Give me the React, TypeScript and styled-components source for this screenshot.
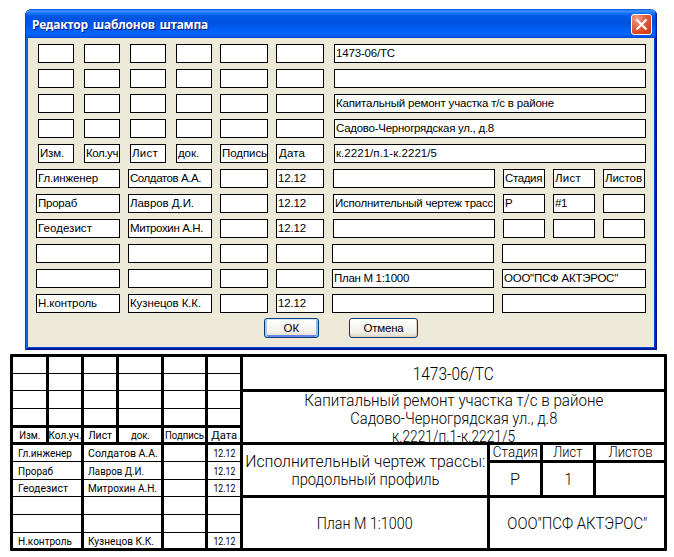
import React, { useLayoutEffect, useRef, useState } from 'react';
import styled, { createGlobalStyle } from 'styled-components';

const GlobalStyle = createGlobalStyle`
  * { box-sizing: border-box; }
  html, body { margin: 0; background: #fff; overflow: hidden; }
  button { margin: 0; padding: 0; }
`;

const Page = styled.div`
  width: 674px;
  height: 557px;
  padding-top: 9px;
  background: #fff;
  color: #000;
  font-family: 'Liberation Sans', Arial, sans-serif;
`;

/* ---------- Text fitted to a given measure ---------- */

const FitSpan = styled.span<{ $anchor: string }>`
  display: inline-block;
  flex: none;
  white-space: pre;
  transform-origin: ${p => p.$anchor} center;
`;

type FitProps = { text: string; width?: number; stretch?: boolean; anchor?: 'left' | 'center' };

function Fit({ text, width, stretch = false, anchor = 'left' }: FitProps) {
  const ref = useRef<HTMLSpanElement>(null);
  const [style, setStyle] = useState<React.CSSProperties>({});
  useLayoutEffect(() => {
    if (!ref.current || !width) return;
    const natural = ref.current.getBoundingClientRect().width;
    if (stretch) setStyle({ transform: `scaleX(${(width + 1) / natural})` });
    else setStyle({ letterSpacing: `${(width + 1 - natural) / text.length}px` });
  }, [text, width, stretch]);
  return <FitSpan ref={ref} $anchor={anchor} style={style}>{text}</FitSpan>;
}

/* ---------- Dialog ---------- */

const Dialog = styled.section`
  width: 632px;
  height: 341px;
  margin-left: 25px;
  border-radius: 7px 7px 0 0;
  background: #ece9d8;
  box-shadow: inset 1px 0 #0831d9, inset -1px -1px #00138c, inset 2px 0 #166aee, inset -2px -2px #001ea0, inset 3px 0 #0855dd, inset -3px -3px #0441d8;
  overflow: hidden;
`;

const TitleBar = styled.header`
  display: flex;
  align-items: center;
  justify-content: space-between;
  height: 29px;
  padding: 2px 5px 0 7px;
  background: linear-gradient(180deg, #0750d8 0, #3c95ff 2px, #1b76fa 4px, #025be9 7px, #0053e1 10px, #0054e3 15px, #0060f8 21px, #0066ff 25px, #005cf0 27px, #0142cd 29px);
  box-shadow: inset 1px 0 #0840ce, inset -1px 0 #001ea0, inset -2px 0 #0441d8;
`;

const Title = styled.h1`
  margin: 0;
  color: #fff;
  font: bold 12px/20px 'Noto Sans', 'Open Sans', sans-serif;
  word-spacing: 2px;
  text-shadow: 1px 1px #0a1883;
`;

const CloseButton = styled.button`
  display: flex;
  align-items: center;
  justify-content: center;
  width: 21px;
  height: 21px;
  border: 1px solid #fff;
  border-radius: 3px;
  background: radial-gradient(circle at 25% 20%, #f0a08a 0, #e5694a 35%, #dd4622 70%, #c13a14 100%);
`;

const Form = styled.div`
  display: flex;
  flex-direction: column;
  gap: 6px;
  padding: 6px 3px 0;
`;

const FormRow = styled.div<{ $indent: number }>`
  display: flex;
  height: 19px;
  padding-left: ${p => p.$indent}px;
`;

const FieldGroup = styled.div<{ $gap: number; $lead?: number }>`
  display: flex;
  gap: ${p => p.$gap}px;
  margin-left: ${p => p.$lead ?? 0}px;
`;

const Field = styled.div<{ $width: number; $inset: number }>`
  width: ${p => p.$width}px;
  height: 19px;
  padding-left: ${p => p.$inset}px;
  border: 1px solid #000;
  background: #fff;
  font-size: 11.5px;
  line-height: 17px;
  overflow: hidden;
`;

const Actions = styled.div`
  display: flex;
  gap: 30px;
  margin: -1px 0 0 236px;
`;

const ActionButton = styled.button<{ $width: number; $primary?: boolean }>`
  display: flex;
  align-items: center;
  justify-content: center;
  width: ${p => p.$width}px;
  height: 20px;
  border: 1px solid #003c74;
  border-radius: 3px;
  background: linear-gradient(#fff, #f3f2ec 70%, #dcd7cb);
  box-shadow: ${p => (p.$primary ? 'inset 0 1px #cee7ff, inset 2px 0 #a9c5f3, inset -2px 0 #98b8ea, inset 0 -2px #6982ee' : 'inset -1px -1px #d6d0c5')};
  color: #000;
  font: 11.5px/17px 'Liberation Sans', Arial, sans-serif;
`;

type Entry = [text: string, width?: number, inset?: number];
const none: Entry = [''];

const upperRows: { cells: Entry[]; wide: Entry }[] = [
  { cells: [none, none, none, none, none, none], wide: ['1473-06/ТС', 58] },
  { cells: [none, none, none, none, none, none], wide: none },
  { cells: [none, none, none, none, none, none], wide: ['Капитальный ремонт участка т/с в районе', 217] },
  { cells: [none, none, none, none, none, none], wide: ['Садово-Черногрядская ул., д.8', 157] },
  {
    cells: [['Изм.', 23], ['Кол.уч', 31], ['Лист', 25], ['док.', 20], ['Подпись', 44], ['Дата', 25, 2]],
    wide: ['к.2221/п.1-к.2221/5', 100],
  },
];

const lowerRows: { role: Entry; person: Entry; date: boolean; tail: Entry[] }[] = [
  { role: ['Гл.инженер', 59], person: ['Солдатов А.А.', 70], date: true, tail: [none, ['Стадия', 36], ['Лист', 25], ['Листов', 36]] },
  { role: ['Прораб', 38], person: ['Лавров Д.И.', 63], date: true, tail: [['Исполнительный чертеж трасс', 157], ['Р', 7], ['#1', 11], none] },
  { role: ['Геодезист', 53], person: ['Митрохин А.Н.', 72], date: true, tail: [none, none, none, none] },
  { role: none, person: none, date: false, tail: [none, none] },
  { role: none, person: none, date: false, tail: [['План М 1:1000', 74], ['ООО"ПСФ АКТЭРОС"', 113]] },
  { role: ['Н.контроль', 58], person: ['Кузнецов К.К.', 70], date: true, tail: [none, none] },
];

function Input({ entry, size }: { entry: Entry; size: number }) {
  return (
    <Field $width={size} $inset={entry[2] ?? 1}>
      {entry[0] && <Fit text={entry[0]} width={entry[1]} />}
    </Field>
  );
}

function TemplateDialog() {
  return (
    <Dialog>
      <TitleBar>
        <Title><Fit text="Редактор шаблонов штампа" width={175} /></Title>
        <CloseButton aria-label="Закрыть">
          <svg width="13" height="13" viewBox="0 0 13 13" fill="none" stroke="#fff" strokeWidth="2.2">
            <path d="M1.5 1.5 11.5 11.5M11.5 1.5 1.5 11.5" />
          </svg>
        </CloseButton>
      </TitleBar>
      <Form>
        {upperRows.map((row, i) => (
          <FormRow key={i} $indent={10}>
            <FieldGroup $gap={10}>
              {row.cells.slice(0, 4).map((c, j) => <Input key={j} entry={c} size={36} />)}
            </FieldGroup>
            <FieldGroup $gap={8} $lead={8}>
              {row.cells.slice(4).map((c, j) => <Input key={j} entry={c} size={48} />)}
            </FieldGroup>
            <FieldGroup $gap={0} $lead={10}><Input entry={row.wide} size={312} /></FieldGroup>
          </FormRow>
        ))}
        {lowerRows.map((row, i) => (
          <FormRow key={i} $indent={8}>
            <FieldGroup $gap={8}>
              <Input entry={row.role} size={84} />
              <Input entry={row.person} size={84} />
            </FieldGroup>
            <FieldGroup $gap={8} $lead={8}>
              <Input entry={none} size={48} />
              <Input entry={row.date ? ['12.12', 27] : none} size={48} />
            </FieldGroup>
            <FieldGroup $gap={8} $lead={row.tail.length === 4 ? 9 : 8}>
              {row.tail.map((c, j) => (
                <Input key={j} entry={c} size={j === 0 ? 162 : row.tail.length === 4 ? 42 : 144} />
              ))}
            </FieldGroup>
          </FormRow>
        ))}
        <Actions>
          <ActionButton $width={55} $primary><Fit text="ОК" width={15} /></ActionButton>
          <ActionButton $width={69}><Fit text="Отмена" width={39} /></ActionButton>
        </Actions>
      </Form>
    </Dialog>
  );
}

/* ---------- Drawing stamp ---------- */

const Stamp = styled.section`
  display: flex;
  gap: 3px;
  width: 657px;
  height: 197px;
  margin: 4px 0 0 10px;
  border: 3px solid #000;
  border-radius: 1px;
  background: #000;
  font-family: Roboto, 'Liberation Sans', sans-serif;
`;

const Revisions = styled.div`
  display: grid;
  flex: none;
  grid-template-columns: 33px 32px 32px 42px 41px 32px;
  grid-template-rows: 17px 17px 18px 19px 17px 17px 18px 17px 18px 18px 15px;
  column-gap: 3px;
`;

const RevisionCell = styled.div<{ $line: number; $span?: number; $start?: boolean }>`
  display: flex;
  align-items: center;
  justify-content: ${p => (p.$start ? 'flex-start' : 'center')};
  grid-column: span ${p => p.$span ?? 1};
  min-width: 0;
  padding-left: ${p => (p.$start ? 4 : 0)}px;
  border-bottom: ${p => p.$line}px solid #000;
  background: #fff;
  font-size: 11.5px;
  line-height: 14px;
`;

const RoleCell = styled(RevisionCell)`
  padding-left: 5px;
`;

const Sheet = styled.div`
  display: grid;
  flex: 1;
  grid-template-columns: 244px 50px 50px 68px;
  grid-template-rows: 32px 50px 15px 32px 50px;
  gap: 3px;
`;

const SheetCell = styled.div<{ $cols?: number; $rows?: number; $size?: number; $top?: number; $leading?: number }>`
  display: flex;
  flex-direction: column;
  align-items: center;
  grid-column: span ${p => p.$cols ?? 1};
  grid-row: span ${p => p.$rows ?? 1};
  min-width: 0;
  padding-top: ${p => p.$top ?? 0}px;
  background: #fff;
  font-size: ${p => p.$size ?? 16}px;
  font-weight: 300;
  line-height: ${p => p.$leading ?? 18}px;
  overflow: hidden;
`;

const headings: [string, number][] = [['Изм.', 20], ['Кол.уч.', 32], ['Лист', 23], ['док.', 18], ['Подпись', 38], ['Дата', 25]];

const signers: [string, number, string, number][] = [
  ['Гл.инженер', 53, 'Солдатов А.А.', 69],
  ['Прораб', 34, 'Лавров Д.И.', 55],
  ['Геодезист', 49, 'Митрохин А.Н.', 68],
  ['', 0, '', 0],
  ['', 0, '', 0],
  ['Н.контроль', 53, 'Кузнецов К.К.', 65],
];

function Line({ text, width }: { text: string; width: number }) {
  return <Fit text={text} width={width} stretch anchor="center" />;
}

function DrawingStamp() {
  return (
    <Stamp>
      <Revisions>
        {[0, 1, 2, 3].map(r => headings.map((_, c) => <RevisionCell key={`${r}-${c}`} $line={r === 3 ? 3 : 1} />))}
        {headings.map(([text, w]) => (
          <RevisionCell key={text} $line={3}><Line text={text} width={w} /></RevisionCell>
        ))}
        {signers.map(([role, roleWidth, person, personWidth], i) => {
          const line = i === 5 ? 0 : 1;
          return (
            <React.Fragment key={i}>
              <RoleCell $line={line} $span={2} $start>{role && <Fit text={role} width={roleWidth} stretch />}</RoleCell>
              <RevisionCell $line={line} $span={2} $start>{person && <Fit text={person} width={personWidth} stretch />}</RevisionCell>
              <RevisionCell $line={line} />
              <RevisionCell $line={line}>{role && <Line text="12.12" width={21} />}</RevisionCell>
            </React.Fragment>
          );
        })}
      </Revisions>
      <Sheet>
        <SheetCell $cols={4} $top={8} $size={18}><Line text="1473-06/ТС" width={80} /></SheetCell>
        <SheetCell $cols={4}>
          <Line text="Капитальный ремонт участка т/с в районе" width={298} />
          <Line text="Садово-Черногрядская ул., д.8" width={206} />
          <Line text="к.2221/п.1-к.2221/5" width={122} />
        </SheetCell>
        <SheetCell $rows={2} $top={8}>
          <Line text="Исполнительный чертеж трассы:" width={239} />
          <Line text="продольный профиль" width={147} />
        </SheetCell>
        <SheetCell $size={14} $leading={15}><Line text="Стадия" width={44} /></SheetCell>
        <SheetCell $size={14} $leading={15}><Line text="Лист" width={28} /></SheetCell>
        <SheetCell $size={14} $leading={15}><Line text="Листов" width={43} /></SheetCell>
        <SheetCell $top={8}><Line text="Р" width={9} /></SheetCell>
        <SheetCell $top={8}><Line text="1" width={7} /></SheetCell>
        <SheetCell />
        <SheetCell $top={17}><Line text="План М 1:1000" width={95} /></SheetCell>
        <SheetCell $cols={3} $top={17}><Line text={'ООО"ПСФ АКТЭРОС"'} width={139} /></SheetCell>
      </Sheet>
    </Stamp>
  );
}

export default function App() {
  return (
    <Page>
      <GlobalStyle />
      <TemplateDialog />
      <DrawingStamp />
    </Page>
  );
}
